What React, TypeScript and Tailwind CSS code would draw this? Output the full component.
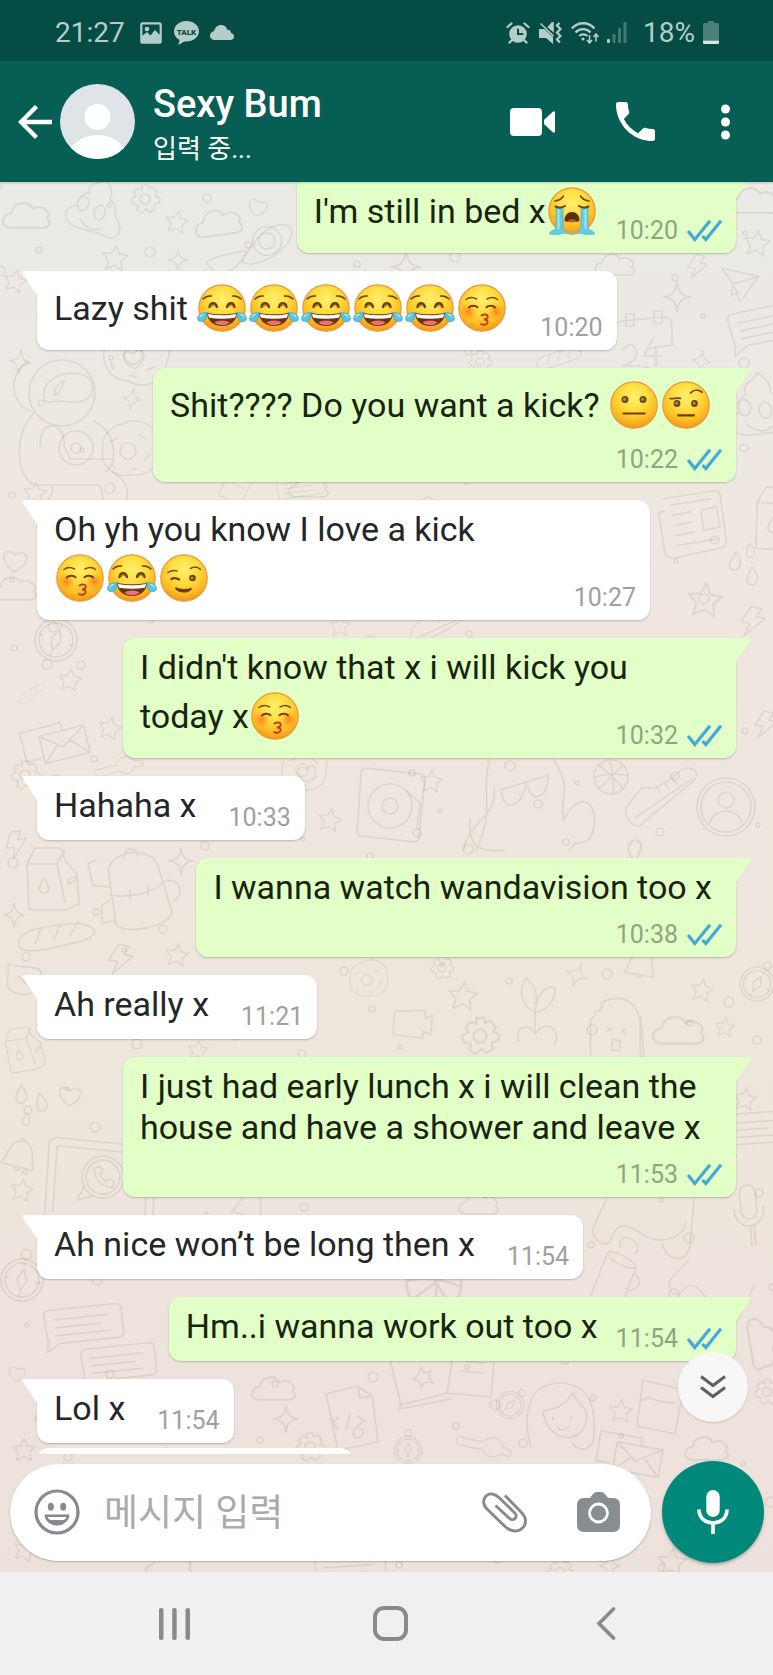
import React from 'react';
import { clsx } from 'clsx';

type EmojiKind = 'joy' | 'kiss' | 'wink' | 'neutral' | 'brow' | 'sob';

const emojiNames: Record<EmojiKind, string> = {
  joy: 'face with tears of joy',
  kiss: 'kissing face',
  wink: 'winking face',
  neutral: 'neutral face',
  brow: 'face with raised eyebrow',
  sob: 'loudly crying face',
};

const Emoji: React.FC<{ kind: EmojiKind }> = ({ kind }) => (
  <svg
    role="img"
    aria-label={emojiNames[kind]}
    viewBox="0 0 48 48"
    className="mx-0.5 my-1 inline-block size-12 overflow-visible align-[-16px]"
    fill="none"
    strokeLinecap="round"
  >
    <circle cx="24" cy="24" r="23.2" fill="url(#face)" stroke="#e9983c" strokeWidth="1.2" />
    {kind === 'joy' && (
      <>
        <path d="M5 15c2-2 5-3.500 8.500-3M43 15c-2-2-5-3.500-8.500-3" stroke="#6b4310" strokeWidth="1.500" />
        <path d="M11.500 23c.5-5 6.500-5 7.500 0M29 23c1-5 7-5 7.500 0" stroke="#6b3f0c" strokeWidth="2.300" />
        <path d="M13.500 22.500c1-2 3-2 4 0M31 22.500c1-2 3-2 4 0" stroke="#a8701c" strokeWidth="1.200" />
        <path d="M9 29c9 1.800 21 1.800 30 0 0 7-6 13-15 13S9 36 9 29z" fill="#6a3311" />
        <path d="M10.200 30c9 1.700 19 1.700 27.600 0 0 1.800-.3 2.700-1 3.800-8 1.200-17.600 1.200-25.600 0-.7-1.100-1-2-1-3.800z" fill="#fff" />
        <path d="M16.500 38.500c3-2.800 12-2.800 15 0-4 3.500-11 3.500-15 0z" fill="#ee7077" />
        <path d="M9.500 28.500C4 28-.5 31-.5 34.500c0 4 6.500 4.500 8.500.5 1-2 .8-4.500 1.500-6.500z" fill="#59c2df" stroke="#3aa5cb" strokeWidth=".6" />
        <path d="M38.500 28.500c5.500-.5 10 2.500 10 6 0 4-6.500 4.500-8.500.5-1-2-.8-4.500-1.500-6.500z" fill="#59c2df" stroke="#3aa5cb" strokeWidth=".6" />
        <path d="M2 33c.5-1.500 2-2.500 3.500-2.700M46 33c-.5-1.500-2-2.500-3.500-2.700" stroke="#b9ecf5" strokeWidth="1.200" />
      </>
    )}
    {kind === 'kiss' && (
      <>
        <circle cx="10.500" cy="27.500" r="8.500" fill="url(#blush)" />
        <circle cx="38" cy="27.500" r="8.500" fill="url(#blush)" />
        <path d="M8 15.500c3-2.500 7-2.500 10.500-.5M29 15c3.500-2 7.500-2 10.500.5" stroke="#77480d" strokeWidth="1.500" />
        <path d="M11 23.500c2-2.200 6.500-2.200 8.500-.2M28.500 23.300c2-2 6.500-2 8.500.2" stroke="#6b3f0c" strokeWidth="2" />
        <path d="M23.500 31.500c3-2 6.800-.8 6.200 1.800-.3 1.500-2 2-3.700 2.200 2.500 0 4 1 3.600 2.900-.5 2.400-4 3-6.600 1.800" stroke="#c5391d" strokeWidth="1.900" />
      </>
    )}
    {kind === 'wink' && (
      <>
        <path d="M8 18.500c3-2 6-2.500 9-1.500M30.500 14.500c3.500-2 7-2 10 1" stroke="#77480d" strokeWidth="1.500" />
        <path d="M11.500 25c2.500-1.500 5-1 7.500.5" stroke="#6b3f0c" strokeWidth="2.200" />
        <circle cx="32.500" cy="24" r="3.300" fill="#70430f" />
        <circle cx="32" cy="24" r="1.300" fill="#b3925e" />
        <path d="M15.500 34c4 5 12.500 5 16 .5-3.500 1.800-12 2-16-.5z" fill="#6b3f0c" stroke="#6b3f0c" strokeWidth="1.500" />
      </>
    )}
    {kind === 'neutral' && (
      <>
        <circle cx="15" cy="18.500" r="3.500" fill="#6f4819" />
        <circle cx="33" cy="18.500" r="3.500" fill="#6f4819" />
        <circle cx="14.500" cy="18.200" r="1.500" fill="#ad8c5f" />
        <circle cx="32.500" cy="18.200" r="1.500" fill="#ad8c5f" />
        <path d="M13.500 32.500h21" stroke="#6b3f0c" strokeWidth="2.200" />
      </>
    )}
    {kind === 'brow' && (
      <>
        <path d="M8 17.500c3 .5 6.500-.8 10.500-.2M28.500 12c2.500-3 7-4 11.500-.8" stroke="#77480d" strokeWidth="1.700" />
        <circle cx="15" cy="22.500" r="3.400" fill="#6f4819" />
        <circle cx="32.500" cy="22.500" r="3.400" fill="#6f4819" />
        <circle cx="14.600" cy="22.200" r="1.400" fill="#ad8c5f" />
        <circle cx="32.100" cy="22.200" r="1.400" fill="#ad8c5f" />
        <path d="M16 34.300h16" stroke="#6b3f0c" strokeWidth="2.200" />
      </>
    )}
    {kind === 'sob' && (
      <>
        <path d="M7 14c3.500-.5 7-2.500 8.500-5M41 14c-3.500-.5-7-2.500-8.500-5" stroke="#77480d" strokeWidth="1.500" />
        <path d="M2 47c-1.500-2 3-4 6-5V21c2-1.500 5-1.500 7 0v21c1.500.5 3 1.500 2.500 3-3 3-11.500 3-15.500 2zM46 47c1.500-2-3-4-6-5V21c-2-1.500-5-1.500-7 0v21c-1.500.5-3 1.500-2.500 3 3 3 11.500 3 15.500 2z" fill="#63cde6" stroke="#47aacb" strokeWidth=".6" />
        <path d="M15.500 45c5 1 12 1 17 0" stroke="#63cde6" strokeWidth="1.200" />
        <path d="M10.500 22v19M37.500 22v19" stroke="#a6e8f2" strokeWidth="1.800" />
        <path d="M7.500 19.500c3 1.500 6.500 1.500 9.500-.5M31 19c3 2 6.500 2 9.500.5" stroke="#6b3f0c" strokeWidth="2" />
        <path d="M16.500 34c0-6 3.500-9 7.500-9s7.500 3 7.500 9c-3 1.500-12 1.500-15 0z" fill="#5f2c0d" />
        <path d="M19 34.500c2-3.500 8-3.500 10 0-3 .7-7 .7-10 0z" fill="#a5602c" />
      </>
    )}
  </svg>
);

const EmojiPaint = () => (
  <svg className="absolute size-0" aria-hidden="true">
    <defs>
      <radialGradient id="face" cx="0.5" cy="0.32" r="0.68">
        <stop offset="0" stopColor="#fff06d" />
        <stop offset="0.45" stopColor="#fedb3c" />
        <stop offset="0.8" stopColor="#fcb722" />
        <stop offset="1" stopColor="#f2941b" />
      </radialGradient>
      <radialGradient id="blush">
        <stop offset="0" stopColor="#fb7a1e" stopOpacity="0.9" />
        <stop offset="1" stopColor="#fb8a1e" stopOpacity="0" />
      </radialGradient>
    </defs>
  </svg>
);

// Doodles are drawn around 0,0 and placed by the list below
const doodles: Record<string, React.ReactNode> = {
  star: <path d="M0-14l4 9 10 1-7 7 2 10-9-5-9 5 2-10-7-7 10-1z" />,
  sparkle: <path d="M0-13c1 8 4 12 12 13-8 1-11 5-12 13-1-8-4-12-12-13 8-1 11-5 12-13z" />,
  cloud: <path d="M-14 9c-10 0-8-12 0-12 2-10 14-11 18-4 8-4 16 3 12 8 5 5 0 9-6 8z" />,
  heart: <path d="M0 12C-20 0-10-14 0-5 10-14 20 0 0 12z" />,
  bolt: <path d="M-4-15h11l-4 9h9L-5 15l3-13h-9z" />,
  drop: <path d="M0-10c6 8 7 12 4 16s-9 2-9-3c0-4 3-8 5-13z" />,
  gear: (
    <>
      <path d="M-3-14h6l1 4 4-2 4 5-2 4 5 2-1 5-5 1 1 5-5 3-4-3-4 4-5-3 1-5-5-1-2-5 5-3-2-4 4-4 4 2z" />
      <circle r="5" />
    </>
  ),
  chat: <path d="M-38-14q0-6 6-6h66q6 0 6 6v22q0 6-6 6h-58l-14 8 2-10zM-28-10h54M-28-2h46M-28 6h54" />,
  mail: <path d="M-25-12h46v28h-46zM-25-12L-4 4l25-16M-25 16l16-15M21 16L4-1M-29 10h-14v-30h42v6" />,
  bell: <path d="M-17 12c6-8 3-26 17-26s11 18 17 26zM-4 12q4 7 8 0M-3-14q3-6 6 0" />,
  ring: (
    <>
      <circle r="29" />
      <circle r="25" />
      <circle cy="-7" r="8" />
      <path d="M-16 16c4-16 28-16 32 0" />
    </>
  ),
  compass: (
    <>
      <circle r="21" />
      <circle r="17" />
      <path d="M0-11l5 11-5 11-5-11zM0-17v3M0 17v-3M17 0h-3M-17 0h3" />
      <circle cy="-26" r="5" />
    </>
  ),
  ball: <path d="M-17 0a17 17 0 1034 0 17 17 0 10-34 0zM-12-12Q4 0 12 12M12-12Q-2 2-12 12M-17 1Q0-6 17-1M-2-17Q4 0 2 17" />,
  milk: <path d="M-26-16l8-16h26l4 12 12 14 2 30-14 6h-36zM-26-16h30l8-14M4-16l8 38M-9-2c7 10 5 15 0 15s-7-5 0-15zM15 0l8-4v4l-8 4z" />,
  backpack: (
    <path d="M-28-20c2-20 44-26 50-2l12 44c2 14-46 24-56 12zM-12-32c0-12 14-12 14-2M-28 4c20 4 44 0 56-12M-7 0v9M11-3v9M-28 10l-8 4v18l14-2M30-8c14-4 18 16 6 20M-40-32l-8 4 4 22 18 2" />
  ),
  bread: <path d="M-38 14c-4-14 16-20 40-26C40-20 46-4 20 4-2 12-32 24-38 14zM-22 10c6-10 0-14 6-16M-4 4c6-10 0-14 6-14M12-2c6-10 2-12 8-14" />,
  astronaut: (
    <>
      <circle r="33" cx="2" cy="-10" />
      <path d="M-16-6c-4-24 40-32 48-14 4 16-10 22-30 18-10 0-18 4-18-4zM-6-8q2-12 10-14-4 14-10 14z" />
      <path d="M-26 10c-22 22-18 66 2 72h62c6 4 4 14 6 24M-20 44c0-32 26-24 24-2l6 14h44M34 18c26 14 22 46 12 50M-30 8c-18-6-24-36-2-50M-8 82c2 14-8 14-4 22M52 68c14 10 20 20 12 34" />
      <circle cx="16" cy="45" r="17" />
      <circle cx="16" cy="45" r="5" />
    </>
  ),
  donut: (
    <>
      <path d="M-6-30c20-10 42 4 40 24 4 20-10 36-30 32-20 6-36-12-32-28-2-14 8-26 22-28z" />
      <circle r="9" />
      <path d="M-20-10l8-4M12-18l8 4M18 10l6-6M-18 14l4 6M4 20h6" />
    </>
  ),
  planet: (
    <>
      <circle r="16" />
      <circle r="9" />
      <path d="M-30 20C-10-10 10-22 26-14c10 10-10 34-46 38zM-70 16c20-8 34-6 46-8-4 10-14 20-34 26z" />
    </>
  ),
  poop: <path d="M-8-22c-4-14 10-10 14-20 10 10 12 14 10 22 12 6 6 14 12 20 10 8 6 24-6 22-20-6-40 0-48-10s2-16 8-18c-2-8 2-14 10-16zM-6-10a6 8 0 100 1zM14-4a6 8 0 100 1zM-12 8c8 10 18 10 24 6" />,
  plane: <path d="M-22-14l42-6-10 34-14-16zM-4-2l24-18M-4-2l2 14 6-8" />,
  paper: <path d="M-30-26l50-10q6 0 7 4l8 46q0 6-5 7l-48 12q-6 0-8-5l-8-40 6-2M-22-20l40-8M-20-10l18-4M-18 0l18-4M-16 10l18-4M-14 20l40-8M8-16l16-4 4 20-16 4z" />,
  calendar: <path d="M-34-20q0-6 6-7l42-4q8 0 8 8v20l-24 4M-24-34h8v12h-8zM4-37h8v12H4zM-34-20v14M-28 2q10-10 14 0t-14 16h18M2-8l-8 16h18M6-2v20" />,
  laptop: (
    <>
      <path d="M-52 40l2-70q0-8 8-8l92 6q8 0 8 8l-2 70M-44 36l2-66 92 6-2 64" />
      <circle cx="5" cy="0" r="21" />
      <circle cx="5" cy="0" r="17" />
      <path d="M-14 10l-6 14 16-5M-4-8c0 10 8 18 18 18l3-5-6-4-3 3q-4-2-6-7l3-3-4-5z" />
    </>
  ),
  turntable: (
    <>
      <path d="M-30-32q0-5 5-5l54 4q5 0 5 5l-4 58q0 5-5 5l-52-4q-5 0-5-5z" />
      <circle r="22" />
      <circle r="8" />
      <path d="M16-16l14 12-2 26" />
      <circle cx="28" cy="26" r="4" />
    </>
  ),
  shades: <path d="M-24-4l46-14M-22-4c0 24 20 18 24-6M4-8c2 18 22 12 20-12M-34-34c-10 30 6 50-14 90M30-34c20 30 4 40 10 60 14-30 34-20 30 6s-20 10-24 24M-60 56c4-30 34-30 30-64M-20 56c-30 4-36-10-34-30" />,
  shoe: <path d="M-40 8l18-22c14 4 26-4 44-20 14-4 20 2 14 12L-24 28c-8 4-18-8-16-20zM-30 20L34-24M-6-14l4 6M4-18l4 6M12-24l4 6" />,
  plant: <path d="M0 14C-20 4-16-16-10-24 0-16 4-8 0 14zM0 14C2-8 12-16 22-14 24 0 12 12 0 14zM0 14v24M0 38c-8-16-24-6-18 8M0 38c12-18 30-6 22 12" />,
  popsicle: <path d="M-22 34l-4-36q4-2 4-8 4 0 6-4-2-8 8-10c16-6 28 4 32 20l4 36M24-10l8 44M-8 4l4 2-4 2M10 4l-4 2 4 2M-2 16h8v10h-8z" />,
  camera: <path d="M-20-10l30-4q4 0 4 4v5l8-5v22l-8-3v4q0 4-4 4l-26-1q-4 0-4-4z" />,
  mic: <path d="M-8-18c0-12 16-12 16 0v16c0 12-16 12-16 0zM-15-4c0 24 30 24 30 0M0 14v20M4 14v20" />,
  leaf: <path d="M-18-14c20 6 34-2 34 14-2 18-20 20-32 12-6-6 0-16-2-26zM-8-2L6 12M-2-4v8h8" />,
  girl: (
    <>
      <path d="M-34 34c-6-20-10-62 28-64 34 0 38 30 34 60-8 10-18 6-20 0M-22-2C4-6 4-18 8-20c4 12 14 12 14 24-4 30-38 26-44-4z" />
      <path d="M-12 4v3M6 4v3M-8 14q6 6 12 0" />
    </>
  ),
  mug: <path d="M-28 28l10-50c2-6 34 4 34 10l-8 44M-18-22c4 10 30 16 34 10M16-4c12 6 6 22-8 18M-4-30c-6-6 0-14 8-12s14 10 8 16" />,
  book: <path d="M-56-28l12 50 46-12 44 4 4-48-40-4-46 12M-44 22l-2 4 52-10M10-38l-8 48M18-22l22 2M16-12l22 2M-24-16l4 6 6-2-2 6 4 6-8-1-4 5-2-6-6-2 5-4z" />,
  doc: <path d="M-20-26l32-8 14 10 6 46-40 8zM12-34l2 12 12-2M-8-2l-6 5 6 5M12-4l6 5-6 5M4-6l-4 16" />,
  glass: <path d="M-20-22l40 10-8 44-38-8zM-22-2c10-6 20 6 34 2" />,
  spanner: <path d="M-36-4q-2-8 8-4l24 2c10-10 20-10 26 2l12 6-2 6-12-2c-8 8-18 6-22-2l-26-2q-8 2-8-6z" />,
  tongue: <path d="M-40 20c-10 6-20-6-16-16l12-26M-40 20c10-30 24-10 40-4s34-2 36-16M44-22l-4 46c-4 20-24 14-28-2" />,
};

const placed: [string, number, number, number, number][] = [
  ['cloud', 28, 217, 1.2, 0], ['poop', 92, 214, 0.9, 12], ['gear', 145, 199, 1, 0], ['star', 177, 222, 0.8, 10],
  ['heart', 258, 207, 0.8, 15], ['cloud', 220, 224, 1.2, -8], ['planet', 267, 241, 0.9, -6], ['star', 115, 258, 0.9, 5],
  ['sparkle', 178, 260, 0.8, 0], ['cloud', 755, 202, 1.2, 0], ['star', 757, 243, 0.9, 8], ['sparkle', 406, 267, 1.2, 0],
  ['cloud', 616, 266, 1, 0], ['bolt', 697, 267, 0.8, 10], ['star', 15, 281, 0.8, 12], ['sparkle', 20, 362, 0.9, 6],
  ['astronaut', 60, 403, 1, 0], ['heart', 134, 358, 0.9, -8], ['donut', 133, 355, 1, 20], ['donut', 128, 451, 0.9, 0],
  ['sparkle', 132, 399, 0.8, 10], ['star', 35, 493, 0.8, 5], ['sparkle', 677, 297, 1.1, 0], ['plane', 736, 287, 0.9, 20],
  ['chat', 768, 327, 1, -12], ['calendar', 650, 348, 1, 0], ['sparkle', 701, 361, 0.8, 10], ['poop', 758, 415, 1, -10],
  ['paper', 692, 526, 1, 2], ['milk', 782, 520, 1, 4], ['drop', 735, 562, 1, 10], ['drop', 750, 551, 0.8, -10],
  ['drop', 752, 577, 1, 0], ['star', 705, 600, 1.2, 5], ['bolt', 752, 622, 1, 12], ['heart', 15, 560, 1, 4],
  ['cloud', 16, 590, 1.1, 0], ['compass', 56, 640, 1, 200], ['bread', 32, 693, 0.4, -20], ['star', 70, 680, 0.8, 8],
  ['mail', 66, 742, 1, -14], ['star', 110, 728, 0.8, 12], ['gear', 25, 775, 1, 0], ['spanner', 120, 768, 0.7, -20],
  ['heart', 307, 773, 0.8, -8], ['donut', 302, 770, 0.7, 12], ['bolt', 16, 845, 0.9, -8], ['milk', 53, 880, 1, 0],
  ['backpack', 137, 890, 1, -2], ['sparkle', 14, 915, 0.9, 0], ['bread', 58, 936, 1, 6], ['bolt', 120, 960, 1, 10],
  ['star', 177, 955, 0.8, 8], ['leaf', 26, 978, 1, 0], ['sparkle', 181, 861, 1, 0], ['star', 330, 820, 0.8, 10],
  ['turntable', 390, 806, 1, 2], ['shades', 524, 794, 1, 0], ['ball', 611, 777, 1, 0], ['shoe', 662, 800, 0.9, 0],
  ['ring', 726, 807, 1, 0], ['star', 431, 781, 0.8, 6], ['bolt', 765, 725, 0.9, 10], ['drop', 635, 850, 1.2, 180],
  ['gear', 442, 968, 0.8, 0], ['star', 463, 996, 1, 5], ['plant', 535, 1000, 0.9, 0], ['sparkle', 577, 975, 0.9, 20],
  ['bell', 641, 964, 0.9, 10], ['compass', 757, 984, 0.8, 30], ['star', 702, 990, 0.8, 10], ['camera', 412, 1022, 0.9, 5],
  ['popsicle', 616, 1024, 1, 6], ['star', 725, 1027, 0.7, 5], ['cloud', 680, 1032, 1.3, 0], ['donut', 367, 980, 0.6, 0],
  ['gear', 480, 1036, 1.3, 0], ['milk', 25, 1050, 0.7, -8], ['heart', 70, 1095, 0.9, 5], ['drop', 21, 1095, 1, 0],
  ['drop', 41, 1103, 1, -12], ['drop', 26, 1120, 0.7, 8], ['bell', 20, 1155, 1, 14], ['laptop', 98, 1177, 1, 2],
  ['star', 22, 1190, 0.8, 10], ['compass', 22, 1280, 1, 10], ['chat', 83, 1327, 1, -6], ['chat', 118, 1365, 0.95, -6],
  ['heart', 17, 1373, 0.7, 10], ['cloud', 275, 1390, 1.1, 0], ['sparkle', 286, 1419, 1, 0], ['doc', 346, 1420, 1, 0],
  ['star', 198, 1050, 0.7, 5], ['mic', 749, 1212, 1, -5], ['chat', 752, 1131, 0.9, -4], ['star', 745, 1099, 0.8, 8],
  ['mug', 620, 1275, 0.9, 10], ['tongue', 650, 1222, 1, 0], ['tongue', 715, 1290, 0.8, 20], ['ball', 434, 1284, 1.6, 10],
  ['book', 445, 1383, 1, 0], ['compass', 510, 1405, 0.65, 45], ['girl', 565, 1413, 1, 0], ['star', 621, 1411, 0.8, 5],
  ['glass', 663, 1402, 1, 0], ['gear', 767, 1392, 0.9, 0], ['cloud', 762, 1345, 1.3, 80], ['gear', 310, 1447, 1, 0],
  ['star', 24, 1450, 0.8, 0], ['compass', 408, 1450, 0.65, 0], ['spanner', 485, 1447, 0.8, 8], ['mail', 640, 1458, 1, 10],
  ['cloud', 708, 1450, 1.1, 0], ['star', 672, 1562, 1, 5], ['star', 25, 1550, 0.8, 15], ['cloud', 170, 1568, 1.2, 0],
  ['sparkle', 610, 1566, 0.9, 0], ['gear', 560, 1572, 0.9, 0], ['chat', 350, 1575, 0.9, -4], ['cloud', 310, 488, 1, 0],
  ['chat', 300, 488, 0.6, -8], ['glass', 238, 486, 0.6, 20], ['star', 340, 626, 0.7, 0], ['bell', 250, 1206, 0.9, 20],
  ['cloud', 480, 1205, 1, 0], ['shoe', 440, 628, 0.7, 10], ['gear', 480, 362, 0.8, 0], ['bread', 560, 358, 0.6, 0],
];

const dots = Array.from({ length: 230 }, (_, i) => ({
  x: (i * 211 + (i % 7) * 37) % 773,
  y: 186 + ((i * 6 + (i % 11) * 53) % 1384),
  r: 2 + ((i * 5) % 4),
}));

const Wallpaper = () => (
  <svg
    className="absolute inset-0 size-full"
    viewBox="0 182 773 1390"
    preserveAspectRatio="xMidYMin slice"
    fill="none"
    stroke="#6f6558"
    strokeOpacity="0.13"
    strokeLinejoin="round"
    strokeLinecap="round"
    aria-hidden="true"
  >
    {dots.map((d, i) => (
      <circle key={i} cx={d.x} cy={d.y} r={d.r} strokeWidth="1.600" />
    ))}
    {placed.map(([name, x, y, scale, turn], i) => (
      <g key={i} transform={`translate(${x} ${y}) rotate(${turn}) scale(${scale})`} strokeWidth="1.700">
        {doodles[name]}
      </g>
    ))}
  </svg>
);

const StatusBar = () => (
  <div className="flex h-[61px] shrink-0 items-center justify-between bg-[#054d44] pt-1 pr-[54px] pl-[55px] text-[28px] leading-8 text-[#b4cdc9]">
    <div className="flex items-center">
      <span>21:27</span>
      <svg className="ml-[15px] h-[22px] w-[22px]" viewBox="0 0 22 22" fill="none">
        <rect x="1.300" y="1.300" width="19.400" height="19.400" rx="1.500" stroke="currentColor" strokeWidth="2.200" />
        <circle cx="7" cy="7" r="2.300" fill="currentColor" />
        <path d="M2 14l5-4 3.500 3.500L15 8l5 5v7H2z" fill="currentColor" />
      </svg>
      <svg className="ml-3 h-6 w-[25px]" viewBox="0 0 25 24">
        <path d="M12.500 0C5.500 0 0 4.600 0 10.300c0 3.900 2.300 7 5.600 8.800L4.300 24l6-3.600c8 .9 14.700-3.800 14.700-10.100C25 4.600 19.500 0 12.500 0z" fill="currentColor" />
        <text x="12.500" y="13.500" textAnchor="middle" fontSize="8" fontWeight="900" fill="#054d44">TALK</text>
      </svg>
      <svg className="ml-[11px] h-[15px] w-6" viewBox="0 0 24 15" fill="currentColor">
        <path d="M5 15C1.500 15 0 12.800 0 10.500S2 6.200 4 6.200C5 2.500 7.500 0 11 0c3.200 0 5.600 2 6.300 4.800C20 4.600 21 6.300 21 8c2 .3 3 1.800 3 3.500 0 2-1.500 3.500-3.500 3.500z" />
      </svg>
    </div>
    <div className="flex items-center">
      <svg className="h-[22px] w-6" viewBox="0 0 24 22" fill="none" stroke="currentColor" strokeLinecap="round">
        <circle cx="12" cy="12" r="8.800" fill="currentColor" stroke="none" />
        <path d="M1.500 5L5.500 1.500M22.500 5l-4-3.500" strokeWidth="2.200" />
        <path d="M5.500 18.500L3.500 20.500M18.500 18.500l2 2" strokeWidth="2.400" />
        <path d="M12 7.500V12h4.500" stroke="#054d44" strokeWidth="2" />
      </svg>
      <svg className="ml-[9px] h-[22px] w-[23px]" viewBox="0 0 23 22" fill="none">
        <path d="M0 7h5l2 1.500L14 15v7l-7-6H0z" fill="currentColor" />
        <path d="M9.500 5L14 0v9zM1.500 1.500L14.500 14" fill="currentColor" stroke="currentColor" strokeWidth="1.600" />
        <path d="M20.500 1l-2.500 2.500 3.500 3.500-3.500 3.500 3.500 3.500-3.500 3.500 3 3" stroke="currentColor" strokeWidth="2.200" />
      </svg>
      <svg className="ml-[9px] h-[22px] w-7" viewBox="0 0 28 22" fill="none" stroke="currentColor" strokeWidth="2.300">
        <path d="M.8 6.500C7-.5 17.500-.5 23.500 6.500M4.500 10.500c4-4.500 11-4.500 15 0M8.300 14c2.200-2.300 5.800-2.300 8 0" />
        <circle cx="12" cy="17" r="1.600" fill="currentColor" stroke="none" />
        <path d="M18.500 13v7M16 18l2.500 3 2.500-3M25 19.500v-7M22.500 15l2.500-3 2.500 3" strokeWidth="1.600" />
      </svg>
      <svg className="ml-2 h-[22px] w-5" viewBox="0 0 20 22" fill="currentColor">
        <rect x="0" y="17" width="3" height="4" rx="1" />
        <g opacity="0.35">
          <rect x="5.500" y="12" width="3" height="9" rx="1" />
          <rect x="11" y="6" width="3" height="15" rx="1" />
          <rect x="16.500" y="0" width="3" height="21" rx="1" />
        </g>
      </svg>
      <span className="ml-4">18%</span>
      <svg className="ml-2 h-[23px] w-4" viewBox="0 0 16 23" fill="currentColor">
        <path d="M5 0h6v2h3.500Q16 2 16 3.500V19H0V3.500Q0 2 1.500 2H5z" opacity="0.4" />
        <path d="M0 19.500h16V22q0 1-1 1H1q-1 0-1-1z" fill="#dbe7e5" />
      </svg>
    </div>
  </div>
);

const Header = () => (
  <header className="relative z-10 flex h-[121px] shrink-0 items-center bg-[#075e54] pr-[43px] pl-[18px] text-white shadow-[0_1px_2px_rgba(0,0,0,0.2)]">
    <button type="button" aria-label="뒤로">
      <svg className="h-[34px] w-[34px]" viewBox="0 0 34 34" fill="none" stroke="currentColor" strokeWidth="4.300">
        <path d="M34 17H3M18.500 1.500L3 17l15.500 15.500" />
      </svg>
    </button>
    <svg className="ml-2 size-[75px] shrink-0 rounded-full bg-[#dfe4e8]" viewBox="0 0 75 75" fill="#fff">
      <circle cx="37.500" cy="33" r="13" />
      <path d="M10 66c6-10 16-15 27.500-15S59 56 65 66L52 75H23z" />
    </svg>
    <div className="ml-[18px] min-w-0 flex-1">
      <h1 className="truncate text-[38px] leading-[54px] font-medium">Sexy Bum</h1>
      <p className="text-[26px] leading-9">입력 중...</p>
    </div>
    <button type="button" aria-label="영상 통화">
      <svg className="h-7 w-[45px]" viewBox="0 0 45 28" fill="currentColor">
        <rect width="32" height="28" rx="4" />
        <path d="M34 12L42.500 4Q45 2 45 5v18q0 3-2.500 1L34 16z" />
      </svg>
    </button>
    <button type="button" aria-label="음성 통화" className="ml-[61px]">
      <svg className="size-[39px]" viewBox="3 3 18 18" fill="currentColor">
        <path d="M6.620 10.790c1.440 2.830 3.760 5.140 6.590 6.590l2.200-2.200c.27-.27.67-.36 1.020-.24 1.120.37 2.330.57 3.570.57.55 0 1 .45 1 1V20c0 .55-.45 1-1 1-9.390 0-17-7.610-17-17 0-.55.45-1 1-1h3.500c.55 0 1 .45 1 1 0 1.250.2 2.450.57 3.570.11.35.03.74-.25 1.020z" />
      </svg>
    </button>
    <button type="button" aria-label="메뉴" className="ml-[66px]">
      <svg className="h-9 w-[9px]" viewBox="0 0 9 36" fill="currentColor">
        <circle cx="4.500" cy="5" r="4.500" />
        <circle cx="4.500" cy="18" r="4.500" />
        <circle cx="4.500" cy="31" r="4.500" />
      </svg>
    </button>
  </header>
);

type Message = {
  mine?: boolean;
  time: string;
  // where the time goes: beside the text, on its last line, or on a row below
  meta: 'beside' | 'corner' | 'below';
  text: string;
  emojis?: EmojiKind[];
};

const messages: Message[] = [
  { mine: true, time: '10:20', meta: 'beside', text: "I'm still in bed x", emojis: ['sob'] },
  { time: '10:20', meta: 'beside', text: 'Lazy shit ', emojis: ['joy', 'joy', 'joy', 'joy', 'joy', 'kiss'] },
  { mine: true, time: '10:22', meta: 'below', text: 'Shit???? Do you want a kick? ', emojis: ['neutral', 'brow'] },
  { time: '10:27', meta: 'corner', text: 'Oh yh you know I love a kick ', emojis: ['kiss', 'joy', 'wink'] },
  { mine: true, time: '10:32', meta: 'corner', text: "I didn't know that x i will kick you today x", emojis: ['kiss'] },
  { time: '10:33', meta: 'beside', text: 'Hahaha x' },
  { mine: true, time: '10:38', meta: 'below', text: 'I wanna watch wandavision too x' },
  { time: '11:21', meta: 'beside', text: 'Ah really x' },
  { mine: true, time: '11:53', meta: 'below', text: 'I just had early lunch x i will clean the house and have a shower and leave x' },
  { time: '11:54', meta: 'beside', text: 'Ah nice won’t be long then x' },
  { mine: true, time: '11:54', meta: 'beside', text: 'Hm..i wanna work out too x' },
  { time: '11:54', meta: 'beside', text: 'Lol x' },
];

const Bubble: React.FC<{ message: Message }> = ({ message }) => {
  const { mine, time, meta, text, emojis = [] } = message;

  return (
    <li
      className={clsx(
        'relative max-w-[613px] shrink-0 rounded-xl pt-[9px] pr-[14px] pb-2 pl-[17px] shadow-[0_1px_2px_rgba(0,0,0,0.22)]',
        mine ? 'self-end rounded-tr-none bg-[#e1ffc7]' : 'self-start rounded-tl-none bg-white',
        meta === 'beside' && 'flex items-end',
        meta === 'beside' && (mine ? 'gap-[18px]' : 'gap-8'),
        meta !== 'beside' && 'grid'
      )}
    >
      <svg
        className={clsx('absolute top-0 h-6 w-4', mine ? '-right-[15px] text-[#e1ffc7]' : '-left-[15px] -scale-x-100 text-white')}
        viewBox="0 0 16 24"
        fill="currentColor"
      >
        <path d="M0 0h14q3 0 1 3L1 24H0z" />
      </svg>
      <p className={clsx('mb-1.5 text-[34px] leading-[41px]', mine ? 'text-[#18240f]' : 'text-[#242627]', meta !== 'beside' && 'col-start-1 row-start-1 pr-[10px]')}>
        {text}
        {emojis.length > 0 && (
          <span className="whitespace-nowrap">
            {emojis.map((kind, i) => (
              <Emoji key={i} kind={kind} />
            ))}
          </span>
        )}
      </p>
      <span
        className={clsx(
          'flex items-center gap-[9px] text-[25px] leading-[29px]',
          mine ? 'text-[#90a480]' : 'text-[#a0a0a0]',
          meta !== 'beside' && 'col-start-1 self-end justify-self-end',
          meta === 'corner' && 'row-start-1',
          meta === 'below' && 'row-start-2 mt-1.5'
        )}
      >
        <time>{time}</time>
        {mine && (
          <svg className="h-[22px] w-[35px]" viewBox="0 0 35 22" fill="none" stroke="#42a9d9" strokeWidth="3.200">
            <path d="M1 11l6.800 8.500L23 .8M15.500 16L18.800 19.500 34 .8" />
          </svg>
        )}
      </span>
    </li>
  );
};

const Composer = () => (
  <footer className="relative flex shrink-0 items-center gap-[11px] pt-[7px] pr-[9px] pb-[9px] pl-[10px]">
    <div className="flex h-[97px] min-w-0 flex-1 items-center rounded-full bg-white pr-[31px] pl-6 shadow-[0_1px_2px_rgba(0,0,0,0.25)]">
      <button type="button" aria-label="이모티콘" className="shrink-0">
        <svg className="size-[46px]" viewBox="0 0 46 46" fill="#858a90">
          <circle cx="23" cy="23" r="21" fill="none" stroke="#858a90" strokeWidth="3.200" />
          <ellipse cx="16.800" cy="17.800" rx="3" ry="4" />
          <ellipse cx="29.200" cy="17.800" rx="3" ry="4" />
          <path d="M10.500 25.500h25c0 6-5.500 11-12.500 11s-12.500-5-12.500-11z" />
          <path d="M13.500 28h19q-1 2.500-3 3h-13q-2-.5-3-3z" fill="#fff" />
        </svg>
      </button>
      <input
        type="text"
        aria-label="메시지 입력"
        placeholder="메시지 입력"
        className="ml-6 min-w-0 flex-1 bg-transparent pt-1 text-[37px] leading-[52px] outline-none placeholder:text-[#aaaaaa]"
      />
      <button type="button" aria-label="첨부" className="shrink-0">
        <svg className="h-[41px] w-[45px]" viewBox="0 0 45 41" fill="none" stroke="#858a90" strokeWidth="2.900" strokeLinecap="butt">
          <path d="M13.500 13.500L27 26c2 2 4.500 2.200 6 .6s1.300-4-.6-6L17.500 6C13 1.500 7.500.5 4 4S.8 13 5 17l18 17.500c6 5.500 13 6 17.500 1.500s3.800-11-1.500-16L23 3.500" />
        </svg>
      </button>
      <button type="button" aria-label="카메라" className="ml-[50px] shrink-0">
        <svg className="h-10 w-[43px]" viewBox="0 0 43 40">
          <path d="M7 6h6l3-4q1.500-2 4-2h4q2.500 0 4 2l3 4h5q7 0 7 7v20q0 7-7 7H7q-7 0-7-7V13q0-7 7-7z" fill="#888d92" />
          <circle cx="21.500" cy="21" r="9" fill="none" stroke="#fff" strokeWidth="2.800" />
        </svg>
      </button>
    </div>
    <button
      type="button"
      aria-label="음성 메시지"
      className="flex size-[102px] shrink-0 items-center justify-center rounded-full bg-[#00897b] shadow-[0_2px_3px_rgba(0,0,0,0.25)]"
    >
      <svg className="h-11 w-8" viewBox="0 0 32 44" fill="none" stroke="#fff">
        <rect x="9.300" y="0" width="13.400" height="27" rx="6.700" fill="#fff" stroke="none" />
        <path d="M2 19.500c0 18 28 18 28 0M16 33v11" strokeWidth="3.600" />
      </svg>
    </button>
  </footer>
);

const SystemNav = () => (
  <nav className="grid h-[103px] shrink-0 grid-cols-3 bg-[#f0f0f0] pr-[59px] pl-[66px] text-[#8a8a8a]">
    <button type="button" aria-label="최근 앱" className="flex items-center justify-center">
      <svg className="h-8 w-[31px]" viewBox="0 0 31 32" fill="currentColor">
        <rect width="4.500" height="32" rx="2" />
        <rect x="13.200" width="4.500" height="32" rx="2" />
        <rect x="26.500" width="4.500" height="32" rx="2" />
      </svg>
    </button>
    <button type="button" aria-label="홈" className="flex items-center justify-center">
      <svg className="size-[35px]" viewBox="0 0 35 35" fill="none" stroke="currentColor" strokeWidth="4">
        <rect x="2" y="2" width="31" height="31" rx="9" />
      </svg>
    </button>
    <button type="button" aria-label="뒤로 가기" className="flex items-center justify-center">
      <svg className="h-[33px] w-5" viewBox="0 0 20 33" fill="none" stroke="currentColor" strokeWidth="3.600" strokeLinecap="round">
        <path d="M17.500 2L3 16.500 17.500 31" />
      </svg>
    </button>
  </nav>
);

const App: React.FC = () => {
  return (
    <div className="flex h-screen flex-col overflow-hidden font-[Roboto,'Noto_Sans_CJK_KR',sans-serif]">
      <EmojiPaint />
      <StatusBar />
      <Header />
      <div className="relative flex min-h-0 flex-1 flex-col bg-[linear-gradient(#ebeae6,#efe7df_30%,#eee5dd_70%,#ede1db)]">
        <Wallpaper />
        <main className="relative min-h-0 flex-1 overflow-hidden">
          <ul className="-mt-2 flex flex-col gap-[18px] pr-[37px] pl-[37px]">
            {messages.map((message, i) => (
              <Bubble key={i} message={message} />
            ))}
            <li className="-mt-[13px] h-16 w-[315px] self-start rounded-xl bg-white" />
          </ul>
          <button
            type="button"
            aria-label="맨 아래로"
            className="absolute right-[25px] bottom-8 flex size-[70px] items-center justify-center rounded-full bg-[#f8f7f5] shadow-[0_1px_2px_rgba(0,0,0,0.15)]"
          >
            <svg className="h-6 w-[26px]" viewBox="0 0 26 24" fill="none" stroke="#5f6161" strokeWidth="3">
              <path d="M1 1.500l12 9 12-9M1 12.500l12 9 12-9" />
            </svg>
          </button>
        </main>
        <Composer />
      </div>
      <SystemNav />
    </div>
  );
};

export default App;
